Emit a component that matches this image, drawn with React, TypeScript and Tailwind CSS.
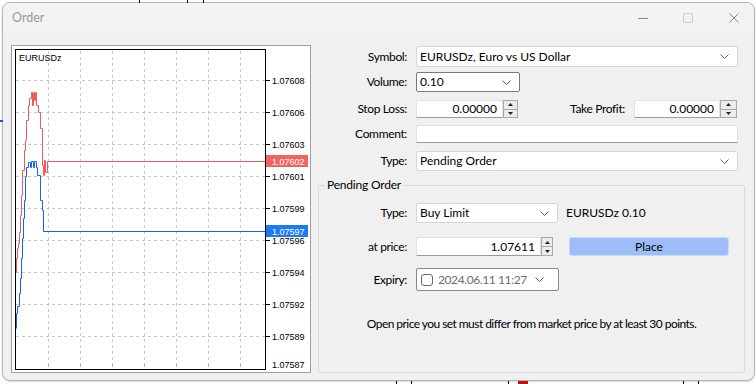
import React from "react";

const FONT = "font-['Lato','Liberation_Sans',sans-serif]";

const Chevron = () => (
  <svg width="9" height="5" viewBox="0 0 9 5" className="shrink-0">
    <polyline points="0.5,0.5 4.5,4.5 8.5,0.5" fill="none" stroke="#606060" strokeWidth="1" />
  </svg>
);

const Label = ({ w, children }: { w: string; children: React.ReactNode }) => (
  <span className={`${w} text-right tracking-[-0.35px] whitespace-nowrap`}>{children}</span>
);

const Spinner = ({ w }: { w: string }) => (
  <div className={`${w} h-full flex flex-col border border-[#a8a8a8] bg-[#ececec]`}>
    <div className="flex-1 flex items-center justify-center border-b border-[#a8a8a8]">
      <svg width="5" height="3" viewBox="0 0 5 3">
        <polygon points="0,3 2.5,0 5,3" fill="#202020" />
      </svg>
    </div>
    <div className="flex-1 flex items-center justify-center">
      <svg width="5" height="3" viewBox="0 0 5 3">
        <polygon points="0,0 2.5,3 5,0" fill="#202020" />
      </svg>
    </div>
  </div>
);

const Field = ({ w, value }: { w: string; value?: string }) => (
  <div
    className={`${w} h-full bg-white border border-[#e2e2e2] border-b-[#9a9a9a] flex items-center justify-end pr-[5px]`}
  >
    {value}
  </div>
);

const Combo = ({ w, value, dark }: { w: string; value: string; dark?: boolean }) => (
  <div
    className={`${w} h-full bg-white border ${
      dark ? "border-[#7a7a7a]" : "border-[#d6d6d6]"
    } rounded-[2px] flex items-center pl-[3px] pr-[8px]`}
  >
    <span className="flex-1 truncate">{value}</span>
    <Chevron />
  </div>
);

const gridX = [48, 80, 112, 144, 176, 208, 240];
const axis = [
  { y: 80, t: "1.07608" },
  { y: 112, t: "1.07606" },
  { y: 144, t: "1.07603" },
  { y: 176, t: "1.07601" },
  { y: 208, t: "1.07599" },
  { y: 240, t: "1.07596" },
  { y: 272, t: "1.07594" },
  { y: 304, t: "1.07592" },
  { y: 336, t: "1.07589" },
];

const askLine =
  "16,272 16,258 17,258 17,248 18,248 18,243 19,243 19,232 20,232 20,215 21,215 21,195 22,195 22,170 24,170 24,150 25,150 25,140 26,140 26,120 28,120 28,105 29,105 29,98 31,98 31,92 32,92 32,105 33,105 33,92 34,92 34,100 35,100 35,92 36,92 36,105 38,105 38,112 40,112 40,128 42,128 42,165 43,165 43,175 44,175 44,160 45,160 45,172 47,172 47,161 265,161";
const bidLine =
  "16,328 16,313 17,313 17,306 19,306 19,293 20,293 20,278 21,278 21,258 22,258 22,238 23,238 23,218 24,218 24,200 25,200 25,176 26,176 26,167 28,167 28,162 30,162 30,167 31,167 31,161 33,161 33,167 34,167 34,161 36,161 36,167 37,167 37,175 40,175 40,200 42,200 42,210 43,210 43,231 265,231";

const Chart = () => (
  <div className="w-[300px] h-[328px] border border-[#a0a0a0] bg-white shrink-0">
    <svg width="298" height="326" viewBox="12 46 298 326" className="font-['Liberation_Sans',sans-serif]">
      <rect x="12" y="46" width="298" height="326" fill="#ffffff" />
      {gridX.map((x) => (
        <line key={x} x1={x + 0.5} y1="51" x2={x + 0.5} y2="366" stroke="#c8c8c8" strokeDasharray="3 3" />
      ))}
      {axis.map((a) => (
        <line key={a.y} x1="16" y1={a.y + 0.5} x2="265" y2={a.y + 0.5} stroke="#c8c8c8" strokeDasharray="3 3" />
      ))}
      <polyline points={askLine} fill="none" stroke="#f25a5a" strokeWidth="1" transform="translate(0.5,0.5)" />
      <polyline points={bidLine} fill="none" stroke="#1563f0" strokeWidth="1" transform="translate(0.5,0.5)" />
      <rect x="15.5" y="49.5" width="250" height="320" fill="none" stroke="#000" />
      {axis.map((a) => (
        <g key={a.t}>
          <line x1="266" y1={a.y + 0.5} x2="270" y2={a.y + 0.5} stroke="#000" />
          <text x="272" y={a.y + 4} fontSize="9" fill="#000">
            {a.t}
          </text>
        </g>
      ))}
      {gridX.map((x) => (
        <line key={x} x1={x + 0.5} y1="364" x2={x + 0.5} y2="367" stroke="#b0b0b0" />
      ))}
      <text x="272" y="368" fontSize="9" fill="#000">
        1.07587
      </text>
      <rect x="266" y="155" width="42" height="12" fill="#f36461" />
      <text x="272" y="164.5" fontSize="9" fill="#fff">
        1.07602
      </text>
      <rect x="266" y="225" width="42" height="12" fill="#1d7af3" />
      <text x="272" y="234.5" fontSize="9" fill="#fff">
        1.07597
      </text>
      <text x="19" y="61" fontSize="9" fill="#000">
        EURUSDz
      </text>
    </svg>
  </div>
);

export default function App() {
  return (
    <div className={`w-[756px] h-[384px] bg-white relative overflow-hidden pt-[2px] pl-[2px] text-[12px] text-black ${FONT}`}>
      {/* background desktop bits */}
      <div className="absolute left-[139px] top-0 w-px h-[3px] bg-black" />
      <div className="absolute left-[187px] top-0 w-px h-[3px] bg-black" />
      <div className="absolute left-[203px] top-0 w-px h-[3px] bg-black" />
      <div className="absolute left-0 top-[120px] w-[3px] h-[2px] bg-[#1d4ef0]" />
      <div className="absolute left-[396px] bottom-0 w-px h-[3px] bg-black" />
      <div className="absolute left-[411px] bottom-0 w-px h-[3px] bg-black" />
      <div className="absolute left-[508px] bottom-0 w-px h-[3px] bg-black" />
      <div className="absolute left-[518px] bottom-0 w-[10px] h-[3px] bg-[#c01010]" />
      <div className="absolute left-[683px] bottom-0 w-px h-[3px] bg-black" />
      <div className="absolute left-[698px] bottom-0 w-px h-[3px] bg-black" />

      <div className="w-[753px] h-[379px] rounded-[8px] border border-[#b4b4b4] bg-[#f0f0f0] flex flex-col overflow-hidden shadow-[0_1px_2px_rgba(0,0,0,0.15)]">
        {/* title bar */}
        <div className="h-[30px] bg-[#f3f3f3] flex items-center pl-[9px] shrink-0">
          <span className="text-[#9a9a9a] text-[12.5px]">Order</span>
          <div className="ml-auto flex items-center mr-[15px]">
            <div className="w-[10px] h-px bg-[#8a8a8a]" />
            <div className="w-[10px] h-[10px] border border-[#d0d0d0] ml-[35px]" />
            <svg width="10" height="10" viewBox="0 0 10 10" className="ml-[36px]">
              <path d="M0.5 0.5 L9.5 9.5 M9.5 0.5 L0.5 9.5" stroke="#8a8a8a" strokeWidth="1" />
            </svg>
          </div>
        </div>

        {/* content */}
        <div className="flex pt-[12px] pl-[8px]">
          <Chart />

          <div className="ml-[7px] w-[427px] mt-[1px] flex flex-col">
            <div className="flex items-center h-[21px]">
              <Label w="w-[89px]">Symbol:</Label>
              <div className="ml-[9px] h-full">
                <Combo w="w-[322px]" value="EURUSDz, Euro vs US Dollar" />
              </div>
            </div>

            <div className="flex items-center h-[20px] mt-[5px]">
              <Label w="w-[89px]">Volume:</Label>
              <div className="ml-[9px] h-full">
                <Combo w="w-[104px]" value="0.10" dark />
              </div>
            </div>

            <div className="flex items-center h-[18px] mt-[8px]">
              <Label w="w-[89px]">Stop Loss:</Label>
              <div className="ml-[9px] h-full flex">
                <Field w="w-[87px]" value="0.00000" />
                <Spinner w="w-[15px]" />
              </div>
              <Label w="w-[107px]">Take Profit:</Label>
              <div className="ml-[9px] h-full flex">
                <Field w="w-[86px]" value="0.00000" />
                <Spinner w="w-[17px]" />
              </div>
            </div>

            <div className="flex items-center h-[18px] mt-[7px]">
              <Label w="w-[89px]">Comment:</Label>
              <div className="ml-[9px] h-full">
                <Field w="w-[322px]" />
              </div>
            </div>

            <div className="flex items-center h-[20px] mt-[8px]">
              <Label w="w-[89px]">Type:</Label>
              <div className="ml-[9px] h-full">
                <Combo w="w-[322px]" value="Pending Order" />
              </div>
            </div>

            <fieldset className="mt-[7px] h-[195px] border border-[#dadada] rounded-[2px] m-0 p-0 min-w-0">
              <legend className="ml-[6px] px-[2px] leading-[14px] tracking-[-0.2px]">Pending Order</legend>

              <div className="flex items-center h-[20px] mt-[11px]">
                <Label w="w-[88px]">Type:</Label>
                <div className="ml-[9px] h-full">
                  <Combo w="w-[142px]" value="Buy Limit" />
                </div>
                <span className="ml-[8px]">EURUSDz 0.10</span>
              </div>

              <div className="flex items-center h-[19px] mt-[14px]">
                <Label w="w-[88px]">at price:</Label>
                <div className="ml-[9px] h-full flex">
                  <Field w="w-[125px]" value="1.07611" />
                  <Spinner w="w-[12px]" />
                </div>
                <button
                  type="button"
                  className="ml-[16px] w-[160px] h-full bg-[#9dbdf9] border border-[#c8d8f5] rounded-[3px] text-black"
                >
                  Place
                </button>
              </div>

              <div className="flex items-center h-[23px] mt-[12px]">
                <Label w="w-[88px]">Expiry:</Label>
                <div className="ml-[9px] h-full w-[143px] bg-white border border-[#8a8a8a] rounded-[2px] flex items-center pl-[4px] pr-[14px]">
                  <div className="w-[12px] h-[12px] rounded-[3px] border border-[#6a6a6a] shrink-0" />
                  <span className="ml-[5px] w-[89px] overflow-hidden whitespace-nowrap text-[#6e6e6e] tracking-[-0.4px]">
                    2024.06.11 11:27
                  </span>
                  <div className="ml-auto">
                    <Chevron />
                  </div>
                </div>
              </div>

              <div className="mt-[26px] text-center leading-[14px] tracking-[-0.55px] whitespace-nowrap">
                Open price you set must differ from market price by at least 30 points.
              </div>
            </fieldset>
          </div>
        </div>
      </div>
    </div>
  );
}
